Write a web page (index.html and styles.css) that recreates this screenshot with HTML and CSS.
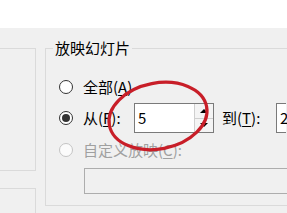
FILE: index.html
```html
<!DOCTYPE html>
<html lang="zh-CN">
<head>
<meta charset="utf-8">
<link rel="stylesheet" href="styles.css">
</head>
<body>
<div class="top"></div>
<div class="main">
  <div class="side">
    <div class="side-box1"></div>
    <div class="side-box2"></div>
  </div>
  <div class="group">
    <div class="title">放映幻灯片</div>
    <div class="row r1">
      <span class="radio"></span>
      <span class="lbl">全部(<u>A</u>)</span>
    </div>
    <div class="row r2">
      <span class="radio checked"></span>
      <span class="lbl from">从(<u>F</u>):</span>
      <div class="spin">
        <span class="val">5</span>
        <span class="btns">
          <span class="btn"><span class="up"></span></span>
          <span class="btn"><span class="down"></span></span>
        </span>
      </div>
      <span class="lbl to">到(<u>T</u>):</span>
      <div class="box2"><span class="val">2</span></div>
    </div>
    <div class="row r3">
      <span class="radio disabled"></span>
      <span class="lbl dis">自定义放映(<u>C</u>):</span>
    </div>
    <div class="combo"></div>
  </div>
</div>
<svg class="mark" width="287" height="213" viewBox="0 0 287 213">
  <ellipse cx="158" cy="116" rx="49.5" ry="33" transform="rotate(-11 158 116)" fill="none" stroke="#c81e28" stroke-width="3.2"/>
</svg>
</body>
</html>
```
FILE: styles.css
```css
html, body {
  margin: 0;
  padding: 0;
}
body {
  width: 287px;
  height: 213px;
  overflow: hidden;
  position: relative;
  background: #f0f0f0;
  font-family: "Noto Sans CJK SC", "Microsoft YaHei", sans-serif;
  font-size: 15px;
  color: #000;
}
.top {
  height: 28px;
  background: #fff;
}
.main {
  display: flex;
  padding-top: 20px;
  height: 165px;
}
.side {
  width: 37px;
  margin-left: -1px;
  flex: none;
  display: flex;
  flex-direction: column;
}
.side-box1 {
  box-sizing: border-box;
  height: 123px;
  border: 1px solid #dadada;
}
.side-box2 {
  box-sizing: border-box;
  margin-top: 17px;
  height: 25px;
  border: 1px solid #dadada;
  border-bottom: none;
}
.group {
  box-sizing: border-box;
  margin-left: 9px;
  margin-right: -1px;
  flex: 1;
  height: 158px;
  border: 1px solid #dadada;
  border-right: none;
  display: flex;
  flex-direction: column;
  align-items: flex-start;
}
.title {
  margin: -11px 0 0 7px;
  padding: 0 2px;
  line-height: 20px;
  height: 20px;
  background: #f0f0f0;
  white-space: nowrap;
}
.row {
  display: flex;
  align-items: center;
  white-space: nowrap;
}
.r1 {
  margin-top: 19px;
  height: 20px;
}
.r2 {
  margin-top: 6px;
  height: 30px;
}
.r3 {
  margin-top: 7px;
  height: 20px;
}
.radio {
  box-sizing: border-box;
  width: 14px;
  height: 14px;
  margin-left: 13px;
  border: 1px solid #333;
  border-radius: 50%;
  background: #fff;
  flex: none;
  display: flex;
  align-items: center;
  justify-content: center;
}
.radio.checked::after {
  content: "";
  width: 8px;
  height: 8px;
  border-radius: 50%;
  background: #333;
}
.radio.disabled {
  border-color: #c4c4c4;
  background: #fbfbfb;
}
.lbl {
  margin-left: 10px;
  line-height: 20px;
}
.lbl u {
  text-underline-offset: 2px;
}
.from {
  width: 51px;
  flex: none;
}
.dis {
  color: #a0a0a0;
}
.spin {
  box-sizing: border-box;
  width: 80px;
  height: 30px;
  border: 1px solid #7a7a7a;
  background: #fff;
  display: flex;
  flex: none;
}
.val {
  flex: 1;
  padding-left: 3px;
  line-height: 28px;
}
.btns {
  width: 18px;
  display: flex;
  flex-direction: column;
  border-left: 1px solid #cfcfcf;
}
.btn {
  flex: 1;
  display: flex;
  align-items: center;
  justify-content: center;
  background: #f4f4f4;
}
.btn + .btn {
  border-top: 1px solid #cfcfcf;
}
.up {
  width: 0;
  height: 0;
  border-left: 4px solid transparent;
  border-right: 4px solid transparent;
  border-bottom: 4px solid #000;
}
.down {
  width: 0;
  height: 0;
  border-left: 4px solid transparent;
  border-right: 4px solid transparent;
  border-top: 4px solid #000;
}
.to {
  margin-left: 8px;
  width: 54px;
  flex: none;
}
.box2 {
  box-sizing: border-box;
  width: 10px;
  height: 30px;
  border: 1px solid #7a7a7a;
  border-right: none;
  background: #fff;
  display: flex;
  flex: none;
}
.combo {
  box-sizing: border-box;
  margin: 8px 0 0 38px;
  align-self: stretch;
  height: 26px;
  border: 1px solid #adadad;
  border-right: none;
  background: #f0f0f0;
}
.mark {
  position: absolute;
  left: 0;
  top: 0;
  pointer-events: none;
}
```
